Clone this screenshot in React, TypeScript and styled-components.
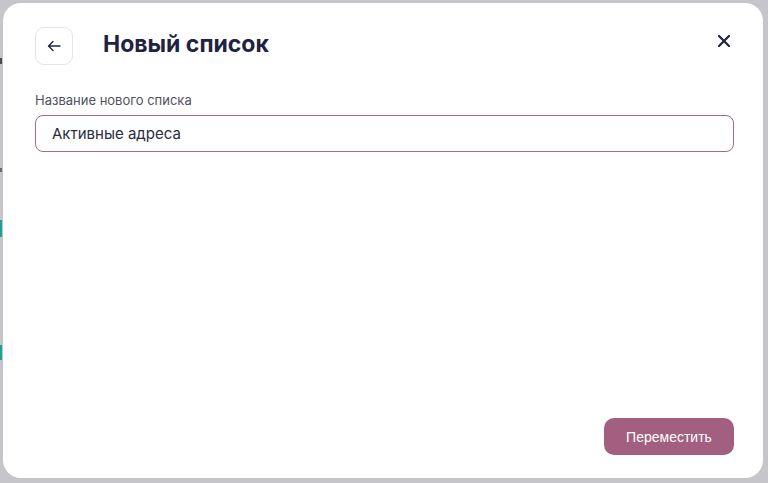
import React, { useState } from 'react';
import styled, { createGlobalStyle } from 'styled-components';

const GlobalStyle = createGlobalStyle`
  html, body {
    margin: 0;
    padding: 0;
    height: 100%;
  }
  #root {
    height: 100%;
  }
  * {
    box-sizing: border-box;
  }
`;

const Backdrop = styled.div`
  position: relative;
  width: 768px;
  height: 483px;
  padding: 3px 5px 5px 3px;
  background-color: #c6c6ca;
  display: flex;
`;

// slivers of the page behind the overlay, peeking out at the left edge
const PeekMark = styled.span<{ $top: number; $h: number; $color: string }>`
  position: absolute;
  left: 0;
  top: ${(p) => p.$top}px;
  width: 2px;
  height: ${(p) => p.$h}px;
  background: ${(p) => p.$color};
`;

const Modal = styled.div`
  flex: 1;
  display: flex;
  flex-direction: column;
  background: #ffffff;
  border-radius: 18px;
  padding: 24px 29px 23px 32px;
  font-family: Inter, 'Noto Sans', sans-serif;
`;

const Header = styled.div`
  display: flex;
  align-items: center;
  gap: 30px;
  height: 38px;
`;

const BackButton = styled.button`
  width: 38px;
  height: 38px;
  border: 1px solid #e4e4ee;
  border-radius: 9px;
  background: #fff;
  display: flex;
  align-items: center;
  justify-content: center;
  padding: 0;
  cursor: pointer;
  color: #22263f;
`;

const Title = styled.h2`
  margin: -4px 0 0;
  font-size: 23px;
  font-weight: 700;
  color: #1f2340;
  flex: 1;
`;

const CloseButton = styled.button`
  width: 20px;
  height: 20px;
  border: none;
  background: none;
  padding: 0;
  margin-top: -10px;
  display: flex;
  align-items: center;
  justify-content: center;
  cursor: pointer;
  color: #1f2340;
`;

const Field = styled.label`
  display: flex;
  flex-direction: column;
  gap: 7px;
  margin-top: 27px;
`;

const Label = styled.span`
  font-size: 13px;
  color: #505260;
  line-height: 16px;
`;

const Input = styled.input`
  height: 37px;
  border: 1.5px solid #a8678a;
  border-radius: 8px;
  padding: 0 16px;
  font-family: Inter, 'Noto Sans', sans-serif;
  font-size: 15px;
  color: #2b2d42;
  outline: none;
  background: #fff;
`;

const Footer = styled.div`
  margin-top: auto;
  display: flex;
  justify-content: flex-end;
`;

const PrimaryButton = styled.button`
  width: 130px;
  height: 37px;
  border: none;
  border-radius: 10px;
  background: #a35f80;
  color: #fff;
  font-family: 'Liberation Sans', Arial, sans-serif;
  font-size: 14px;
  cursor: pointer;
`;

const App: React.FC = () => {
  const [name, setName] = useState('Активные адреса');

  return (
    <>
      <GlobalStyle />
      <Backdrop>
        <PeekMark $top={58} $h={6} $color="#4a4a55" />
        <PeekMark $top={168} $h={4} $color="#6a6a72" />
        <PeekMark $top={220} $h={17} $color="#1aa395" />
        <PeekMark $top={345} $h={15} $color="#1aa395" />
        <Modal>
          <Header>
            <BackButton aria-label="Назад">
              <svg width="14" height="12" viewBox="0 0 14 12" fill="none">
                <path
                  d="M13 6H1.5M6 1.5 1.5 6 6 10.5"
                  stroke="currentColor"
                  strokeWidth="1.4"
                  strokeLinecap="round"
                  strokeLinejoin="round"
                />
              </svg>
            </BackButton>
            <Title>Новый список</Title>
            <CloseButton aria-label="Закрыть">
              <svg width="12" height="12" viewBox="0 0 12 12" fill="none">
                <path
                  d="M1 1l10 10M11 1 1 11"
                  stroke="currentColor"
                  strokeWidth="2.2"
                  strokeLinecap="round"
                />
              </svg>
            </CloseButton>
          </Header>
          <Field>
            <Label>Название нового списка</Label>
            <Input value={name} onChange={(e) => setName(e.target.value)} />
          </Field>
          <Footer>
            <PrimaryButton>Переместить</PrimaryButton>
          </Footer>
        </Modal>
      </Backdrop>
    </>
  );
};

export default App;
